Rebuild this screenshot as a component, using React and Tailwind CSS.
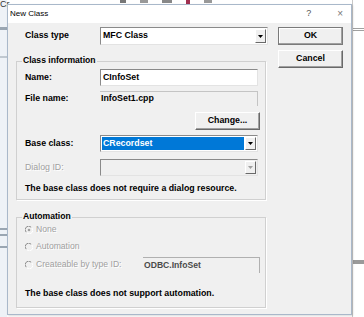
import React from 'react';

const Arrow = ({ disabled }) => (
  <div className="w-[11px] h-full bg-[#f0f0f0] border border-t-white border-l-white border-b-[#696969] border-r-[#696969] flex items-center justify-center">
    <svg width="5" height="3" viewBox="0 0 5 3">
      <path d="M0 0h5L2.5 3z" fill={disabled ? '#a0a0a0' : '#000'} />
    </svg>
  </div>
);

const Combo = ({ value, highlight, disabled, className = '' }) => (
  <div
    className={`flex h-[17px] border border-t-[#8a8a8a] border-l-[#8a8a8a] border-b-[#e3e3e3] border-r-[#e3e3e3] p-[1px] ${
      disabled ? 'bg-[#f0f0f0]' : 'bg-white'
    } ${className}`}
  >
    <div
      className={`flex-1 flex items-center pl-[1px] mr-[1px] text-[8.8px] font-bold ${
        highlight ? 'bg-[#0078d7] text-white' : 'text-black'
      }`}
    >
      {value}
    </div>
    <Arrow disabled={disabled} />
  </div>
);

const Button = ({ children, isDefault }) => (
  <div
    className={`w-[65px] h-[18px] flex items-center justify-center bg-[#f0f0f0] text-[8.8px] font-bold text-black ${
      isDefault
        ? 'border border-[#7a7a7a] shadow-[inset_-1px_-1px_0_#a0a0a0,inset_1px_1px_0_#fff]'
        : 'border border-t-white border-l-white border-b-[#696969] border-r-[#696969] shadow-[inset_-1px_-1px_0_#a0a0a0]'
    }`}
  >
    {children}
  </div>
);

// classic 3D radio, disabled look
const Radio = ({ checked }) => (
  <svg width="8" height="8" viewBox="0 0 8 8" className="shrink-0">
    <path d="M1.2 6.2A3.5 3.5 0 0 1 6.2 1.2" fill="none" stroke="#8c8c8c" strokeWidth="1" />
    <path d="M6.8 1.8A3.5 3.5 0 0 1 1.8 6.8" fill="none" stroke="#ffffff" strokeWidth="1" />
    {checked && <circle cx="4" cy="4" r="1.3" fill="#a0a0a0" />}
  </svg>
);

const Group = ({ title, className = '', children }) => (
  <div className={`relative w-[250px] border border-[#d0d0d0] shadow-[1px_1px_0_#fff] ${className}`}>
    <span className="absolute left-[5px] -top-[7px] px-[1px] bg-[#f0f0f0] text-[8.6px] font-bold leading-[11px] text-black">
      {title}
    </span>
    {children}
  </div>
);

const dim = 'text-[#a0a0a0] [text-shadow:1px_1px_0_#fff]';

export default function App() {
  return (
    <div className="relative w-[364px] h-[317px] overflow-hidden bg-white font-[Liberation_Sans,Arial,sans-serif]">
      {/* background app */}
      <div className="flex h-full">
        <div className="w-[7px] h-full bg-[#eef2f7] flex flex-col">
          <span className="text-[9px] leading-[9px] text-[#333]">Cr</span>
          <div className="mt-[18px] h-[3px] bg-[#9aa6b2]" />
          <div className="mt-[26px] h-[2px] bg-[#c0c8d0]" />
          <div className="mt-[170px] h-[2px] bg-[#9aa6b2]" />
          <div className="mt-[4px] h-[2px] bg-[#9aa6b2]" />
          <div className="mt-[10px] h-[2px] bg-[#9aa6b2]" />
        </div>
        <div className="flex-1" />
        <div className="w-[12px] h-full border-l border-[#c8c8c8] flex flex-col">
          <div className="mt-[28px] h-[3px] border-y border-[#a0a0a0]" />
          <div className="mt-[229px] h-[4px] border-y-2 border-[#9a9a9a]" />
        </div>
      </div>
      <div className="absolute top-0 left-[120px] flex gap-[14px] h-[4px]">
        <div className="w-[6px] h-[3px] bg-[#777]" />
        <div className="w-[8px] h-[3px] bg-[#999]" />
        <div className="w-[10px] h-[3px] bg-[#888]" />
        <div className="w-[4px] h-[4px] bg-[#a03050]" />
        <div className="w-[8px] h-[3px] bg-[#999]" />
      </div>

      {/* dialog window */}
      <div className="absolute left-[7px] top-[4px] w-[345px] h-[311px] border border-[#a9b8ca] bg-[#f0f0f0] shadow-[1px_1px_2px_rgba(0,0,0,0.15)] flex flex-col">
        <div className="h-[18px] bg-white flex items-center pl-[2px] text-[8px] text-black">
          <span>New Class</span>
          <span className="ml-auto text-[9px] text-[#555]">?</span>
          <span className="ml-[26px] mr-[8px] text-[10px] text-[#777] leading-none">×</span>
        </div>

        <div className="flex pl-[8px] pt-[4px]">
          <div className="w-[252px] flex flex-col">
            <div className="flex items-center h-[18px]">
              <span className="w-[84px] pl-[9px] text-[8.8px] font-bold">Class type</span>
              <Combo value="MFC Class" className="w-[168px] h-[18px]" />
            </div>

            <Group title="Class information" className="mt-[16px] h-[139px]">
              <div className="flex flex-col pt-[7px]">
                <div className="flex items-center h-[17px]">
                  <span className="w-[83px] pl-[8px] text-[8.8px] font-bold">Name:</span>
                  <div className="w-[158px] h-[17px] bg-white border border-t-[#8a8a8a] border-l-[#8a8a8a] border-b-[#e3e3e3] border-r-[#e3e3e3] flex items-center pl-[2px] text-[8.8px] font-bold">
                    CInfoSet
                  </div>
                </div>
                <div className="flex items-center h-[15px] mt-[5px]">
                  <span className="w-[83px] pl-[8px] text-[8.8px] font-bold">File name:</span>
                  <div className="w-[158px] h-[15px] border-t border-r border-[#c4c4c4] flex items-center pl-[1px] text-[8.8px] font-bold">
                    InfoSet1.cpp
                  </div>
                </div>
                <div className="flex justify-end pr-[5px] mt-[6px]">
                  <Button>Change...</Button>
                </div>
                <div className="flex items-center h-[17px] mt-[5px]">
                  <span className="w-[83px] pl-[8px] text-[8.8px] font-bold">Base class:</span>
                  <Combo value="CRecordset" highlight className="w-[158px]" />
                </div>
                <div className="flex items-center h-[17px] mt-[7px]">
                  <span className={`w-[83px] pl-[8px] text-[8.8px] ${dim}`}>Dialog ID:</span>
                  <Combo value="" disabled className="w-[158px]" />
                </div>
                <div className="mt-[7px] h-[10px] leading-[10px] pl-[8px] text-[8.8px] font-bold whitespace-nowrap">
                  The base class does not require a dialog resource.
                </div>
              </div>
            </Group>

            <Group title="Automation" className="mt-[17px] h-[91px]">
              <div className="flex flex-col pt-[6px] pl-[8px] pr-[5px]">
                <div className="flex items-center gap-[3px] h-[11px]">
                  <Radio checked />
                  <span className={`text-[8.6px] ${dim}`}>None</span>
                </div>
                <div className="flex items-center gap-[3px] h-[11px] mt-[6px]">
                  <Radio />
                  <span className={`text-[8.6px] ${dim}`}>Automation</span>
                </div>
                <div className="flex items-center gap-[3px] h-[17px] mt-[4px]">
                  <Radio />
                  <span className={`text-[8.6px] ${dim}`}>Createable by type ID:</span>
                  <div className="ml-auto w-[117px] h-[16px] border-t border-r border-[#b0b0b0] flex items-center pl-[1px] text-[8.6px] font-bold text-[#4a4a4a]">
                    ODBC.InfoSet
                  </div>
                </div>
                <div className="mt-[15px] h-[10px] leading-[10px] text-[8.8px] font-bold whitespace-nowrap">
                  The base class does not support automation.
                </div>
              </div>
            </Group>
          </div>

          <div className="ml-[10px] flex flex-col gap-[5px]">
            <Button isDefault>OK</Button>
            <Button>Cancel</Button>
          </div>
        </div>
      </div>
    </div>
  );
}
